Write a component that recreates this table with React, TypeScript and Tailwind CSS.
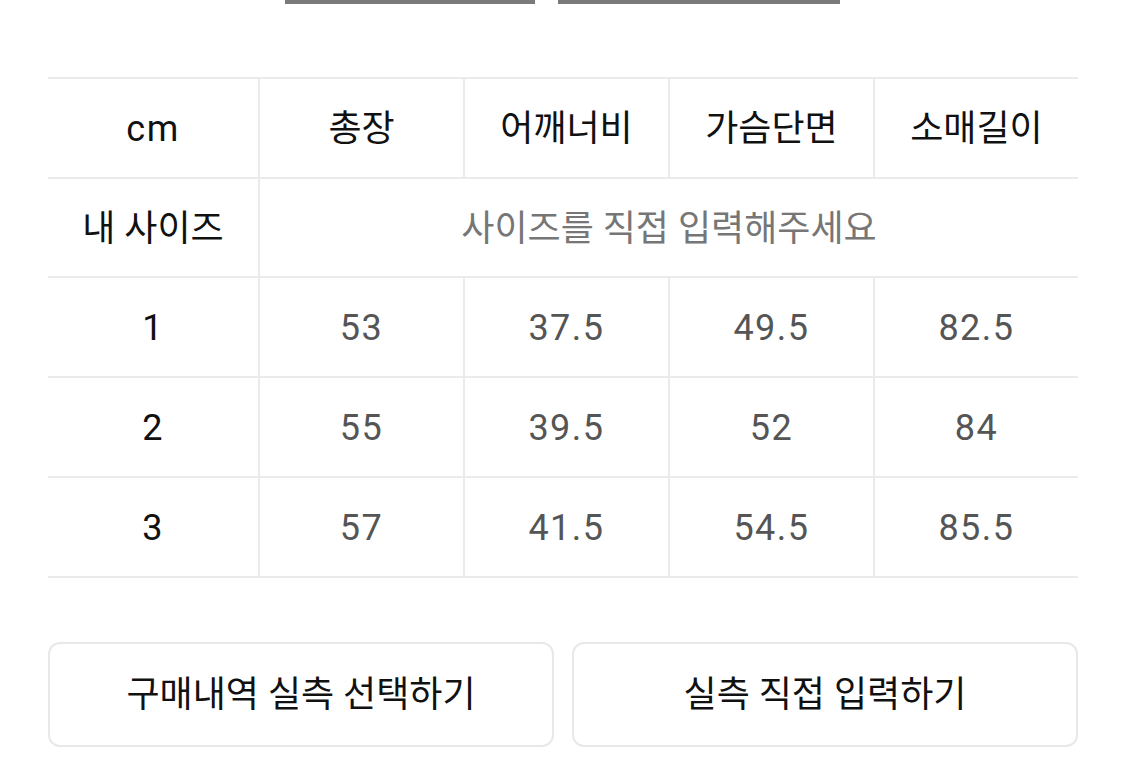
import React from "react";

const font = { fontFamily: '"Roboto", "Noto Sans CJK KR", sans-serif' };

const rows = [
  ["1", "53", "37.5", "49.5", "82.5"],
  ["2", "55", "39.5", "52", "84"],
  ["3", "57", "41.5", "54.5", "85.5"],
];

const headers = ["cm", "총장", "어깨너비", "가슴단면", "소매길이"];

export default function App() {
  return (
    <div className="w-[1125px] h-[780px] bg-white overflow-hidden" style={font}>
      <div className="flex h-[4px]">
        <div className="ml-[285px] w-[250px] h-[4px] bg-[#7a7a7a]" />
        <div className="ml-[23px] w-[282px] h-[4px] bg-[#7a7a7a]" />
      </div>
      <div className="mx-[48px] mt-[73px] w-[1030px] border-t-2 border-[#ebebeb]">
        <div className="grid grid-cols-[212px_205px_205px_205px_1fr] h-[100px] border-b-2 border-[#ebebeb]">
          {headers.map((h, i) => (
            <div
              key={i}
              className={`flex items-center justify-center pt-[2px] text-[36px] text-[#111] ${i === 0 ? "tracking-[1.5px]" : ""} ${i < 4 ? "border-r-2 border-[#ebebeb]" : ""}`}
            >
              {h}
            </div>
          ))}
        </div>
        <div className="grid grid-cols-[212px_1fr] h-[99px] border-b-2 border-[#ebebeb]">
          <div className="flex items-center justify-center pt-[2px] text-[36px] text-[#111] border-r-2 border-[#ebebeb]">
            내 사이즈
          </div>
          <div className="flex items-center justify-center pt-[2px] text-[36px] text-[#767676]">
            사이즈를 직접 입력해주세요
          </div>
        </div>
        {rows.map((r, ri) => (
          <div
            key={ri}
            className="grid grid-cols-[212px_205px_205px_205px_1fr] h-[100px] border-b-2 border-[#ebebeb]"
          >
            {r.map((c, i) => (
              <div
                key={i}
                className={`flex items-center justify-center pt-[2px] text-[36px] tracking-[1.5px] ${i === 0 ? "text-[#111]" : "text-[#555]"} ${i < 4 ? "border-r-2 border-[#ebebeb]" : ""}`}
              >
                {c}
              </div>
            ))}
          </div>
        ))}
      </div>
      <div className="mx-[48px] mt-[64px] w-[1030px] flex gap-[18px]">
        <button className="w-[506px] h-[105px] rounded-[12px] border-2 border-[#e8e8e8] bg-white text-[36px] text-[#111] flex items-center justify-center">
          구매내역 실측 선택하기
        </button>
        <button className="flex-1 h-[105px] rounded-[12px] border-2 border-[#e8e8e8] bg-white text-[36px] text-[#111] flex items-center justify-center">
          실측 직접 입력하기
        </button>
      </div>
    </div>
  );
}
